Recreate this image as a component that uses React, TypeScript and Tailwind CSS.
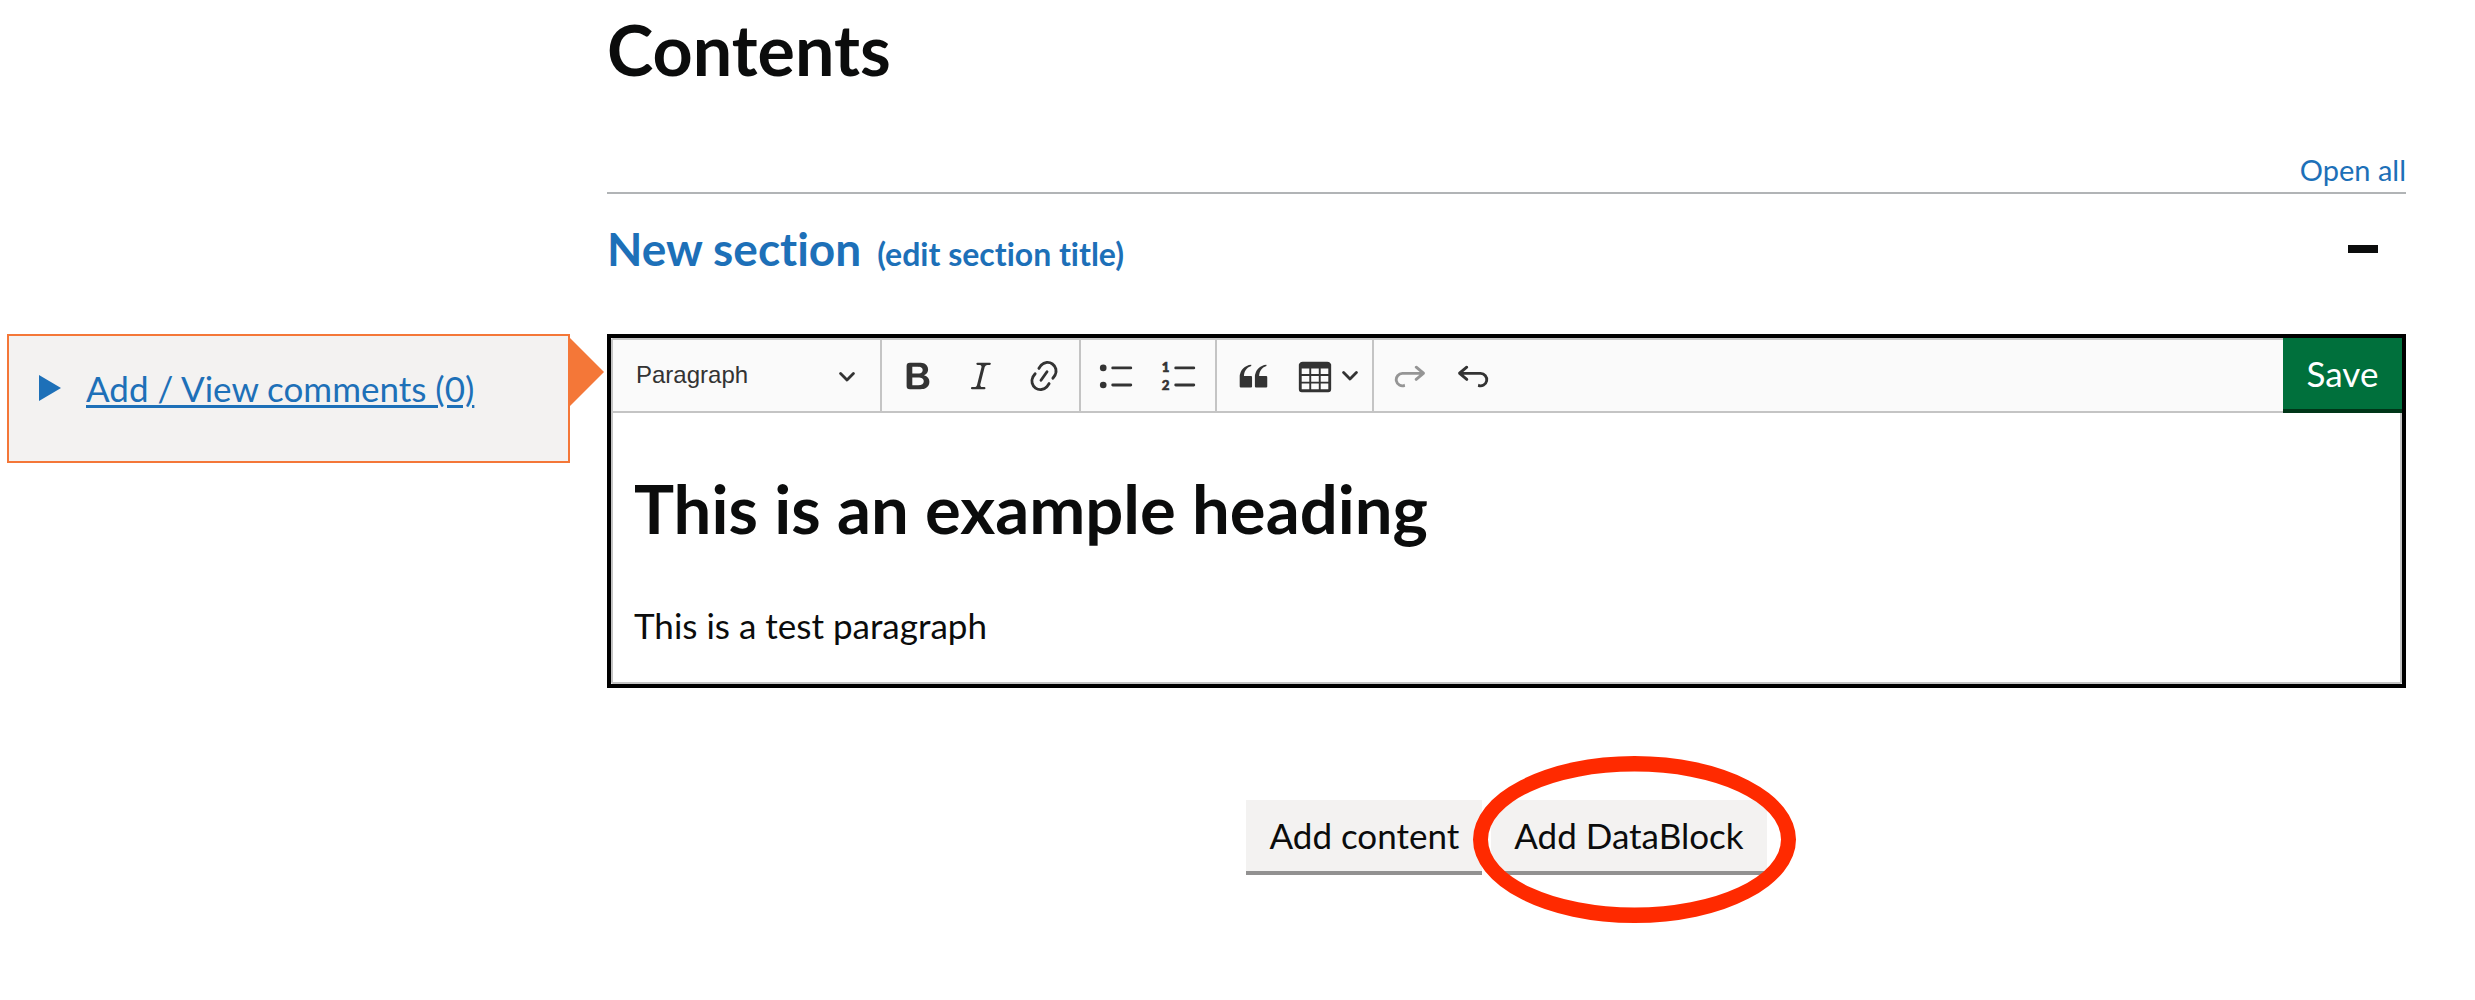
import React from "react";

function Icon({ children }: { children: React.ReactNode }) {
  return (
    <svg viewBox="0 0 20 20" className="size-[38px] shrink-0 fill-current" aria-hidden="true">
      {children}
    </svg>
  );
}

function Chevron({ className = "" }: { className?: string }) {
  return (
    <svg viewBox="0 0 16 10" className={`h-[10px] w-4 shrink-0 ${className}`} fill="none" stroke="#333" strokeWidth="2.8" strokeLinecap="round" strokeLinejoin="round" aria-hidden="true">
      <path d="M1.6 1.5 8 8l6.4-6.5" />
    </svg>
  );
}

function ToolButton({ label, children, disabled = false }: { label: string; children: React.ReactNode; disabled?: boolean }) {
  return (
    <button type="button" aria-label={label} disabled={disabled} className="flex h-full w-[63px] items-center justify-center disabled:opacity-50">
      <Icon>{children}</Icon>
    </button>
  );
}

const listLines =
  "M7 5.75c0 .414.336.75.75.75h9.5a.75.75 0 1 0 0-1.5h-9.5a.75.75 0 0 0-.75.75zm0 9c0 .414.336.75.75.75h9.5a.75.75 0 1 0 0-1.5h-9.5a.75.75 0 0 0-.75.75z";
const undoPath =
  "m5.042 9.367 2.189 1.837a.75.75 0 0 1-.965 1.149l-3.788-3.18a.747.747 0 0 1-.21-.284.75.75 0 0 1 .17-.945L6.23 4.762a.75.75 0 1 1 .964 1.15L4.863 7.866h8.917A.75.75 0 0 1 14 7.9a4 4 0 1 1-1.477 7.718l.344-1.489a2.5 2.5 0 1 0 1.094-4.73l.008-.032H5.042z";

function Toolbar() {
  return (
    <div role="toolbar" aria-label="Editor toolbar" className="flex h-[73px] border-b-2 border-[#c4c4c4] bg-[#fafafa] text-[#333]">
      <div className="relative w-[269px] border-r-2 border-[#c4c4c4]">
        <select aria-label="Heading" className="h-full w-full appearance-none bg-transparent pr-12 pb-[2px] pl-[23px] font-['Liberation_Sans',sans-serif] text-[24px]">
          <option>Paragraph</option>
          <option>Heading</option>
        </select>
        <Chevron className="pointer-events-none absolute top-8 right-[25px]" />
      </div>
      <div className="flex border-r-2 border-[#c4c4c4] px-1">
        <ToolButton label="Bold">
          <path d="M10.187 17H5.773c-.637 0-1.092-.138-1.364-.415-.273-.277-.409-.718-.409-1.323V4.738c0-.617.14-1.062.419-1.332.279-.27.73-.406 1.354-.406h4.68c.69 0 1.288.041 1.793.124.506.083.96.242 1.36.478.341.197.644.447.906.75a3.262 3.262 0 0 1 .808 2.162c0 1.401-.722 2.426-2.167 3.075C15.05 10.175 16 11.315 16 13.01a3.756 3.756 0 0 1-2.296 3.504 6.1 6.1 0 0 1-1.517.377c-.571.073-1.238.11-2 .11zm-.217-6.217H7v4.087h3.069c1.977 0 2.965-.69 2.965-2.072 0-.707-.256-1.22-.768-1.537-.512-.319-1.277-.478-2.296-.478zM7 5.13v3.619h2.606c.729 0 1.292-.067 1.69-.2a1.6 1.6 0 0 0 .91-.765c.165-.267.247-.566.247-.897 0-.707-.26-1.176-.778-1.409-.519-.232-1.31-.348-2.375-.348H7z" />
        </ToolButton>
        <ToolButton label="Italic">
          <path d="m9.586 14.633.021.004c-.036.335.095.655.393.962.082.083.173.15.274.201h1.474a.6.6 0 1 1 0 1.2H5.304a.6.6 0 0 1 0-1.2h1.15c.474-.07.809-.182 1.005-.334.157-.122.291-.32.404-.597l2.416-9.55a1.053 1.053 0 0 0-.281-.823 1.12 1.12 0 0 0-.442-.296H8.15a.6.6 0 0 1 0-1.2h6.443a.6.6 0 1 1 0 1.2h-1.195c-.376.056-.65.155-.823.296-.215.175-.423.439-.623.79l-2.366 9.347z" />
        </ToolButton>
        <ToolButton label="Link">
          <path d="m11.077 15 .991-1.416a.75.75 0 1 1 1.229.86l-1.148 1.64a.748.748 0 0 1-.217.206 5.251 5.251 0 0 1-8.503-5.955.741.741 0 0 1 .12-.274l1.147-1.639a.75.75 0 1 1 1.228.86L4.933 10.7l.006.003a3.75 3.75 0 0 0 6.132 4.294l.006.004zm5.494-5.335a.748.748 0 0 1-.12.274l-1.147 1.639a.75.75 0 1 1-1.228-.86l.86-1.23a3.75 3.75 0 0 0-6.144-4.301l-.86 1.229a.75.75 0 0 1-1.229-.86l1.148-1.64a.748.748 0 0 1 .217-.206 5.251 5.251 0 0 1 8.503 5.955zm-4.563-2.532a.75.75 0 0 1 .184 1.045l-3.155 4.505a.75.75 0 1 1-1.229-.86l3.155-4.506a.75.75 0 0 1 1.045-.184z" />
        </ToolButton>
      </div>
      <div className="flex border-r-2 border-[#c4c4c4] px-1">
        <ToolButton label="Bulleted list">
          <path d={listLines} />
          <circle cx="2.75" cy="5.75" r="1.75" />
          <circle cx="2.75" cy="14.75" r="1.75" />
        </ToolButton>
        <ToolButton label="Numbered list">
          <path d={listLines} />
          <g className="font-['Lato',sans-serif] text-[7px] font-black" stroke="currentColor" strokeWidth="0.3">
            <text x="0.4" y="8">1</text>
            <text x="0.4" y="17.6">2</text>
          </g>
        </ToolButton>
      </div>
      <div className="flex border-r-2 border-[#c4c4c4] px-1">
        <ToolButton label="Block quote">
          <path d="M3 10.423a6.5 6.5 0 0 1 6.056-6.408l.038.67C6.448 5.423 5.354 7.663 5.22 10H9c.552 0 .5.432.5.986v4.511c0 .554-.448.503-1 .503h-5c-.552 0-.5-.449-.5-1.003v-4.574zm8 0a6.5 6.5 0 0 1 6.056-6.408l.038.67c-2.646.739-3.74 2.979-3.873 5.315H17c.552 0 .5.432.5.986v4.511c0 .554-.448.503-1 .503h-5c-.552 0-.5-.449-.5-1.003v-4.574z" />
        </ToolButton>
        <button type="button" aria-label="Insert table" className="flex h-full w-[84px] items-center gap-2 pl-3">
          <Icon>
            <path d="M3 6v3h4V6H3zm0 4v3h4v-3H3zm0 4v3h4v-3H3zm5 3h4v-3H8v3zm5 0h4v-3h-4v3zm4-4v-3h-4v3h4zm0-4V6h-4v3h4zm1.5 8a1.5 1.5 0 0 1-1.5 1.5H3A1.5 1.5 0 0 1 1.5 17V4c.222-.863 1.068-1.5 2-1.5h13c.932 0 1.778.637 2 1.5v13zM12 13v-3H8v3h4zm0-4V6H8v3h4z" />
          </Icon>
          <Chevron />
        </button>
      </div>
      <div className="flex px-1">
        <ToolButton label="Redo" disabled>
          <path transform="matrix(-1 0 0 1 20 0)" d={undoPath} />
        </ToolButton>
        <ToolButton label="Undo">
          <path d={undoPath} />
        </ToolButton>
      </div>
    </div>
  );
}

function Comments() {
  return (
    <aside className="relative h-[129px] self-start border-2 border-[#f47738] bg-[#f3f2f1] pt-8 pl-[30px]">
      <details>
        <summary className="flex cursor-pointer list-none items-center gap-[25px] text-[35px] leading-[40px] text-[#1d70b8]">
          <svg viewBox="0 0 22 26" className="h-[26px] w-[22px] fill-current" aria-hidden="true">
            <path d="M0 0 22 13 0 26z" />
          </svg>
          <span className="underline decoration-3 underline-offset-3">Add / View comments (0)</span>
        </summary>
      </details>
      <svg viewBox="0 0 34 68" className="absolute top-[2px] -right-9 h-[68px] w-[34px] fill-[#f47738]" aria-hidden="true">
        <path d="M0 0 34 34 0 68z" />
      </svg>
    </aside>
  );
}

const secondaryButton = "h-[75px] border-b-4 border-[#929191] bg-[#f3f2f1] px-[23px] text-[35px]";

export default function App() {
  return (
    <main className="grid grid-cols-[563px_1fr] gap-x-[37px] bg-white pr-[69px] pb-[125px] pl-[7px] font-['Lato',sans-serif] text-[#0b0c0c] [font-variant-ligatures:none]">
      <header className="col-start-2 pt-[9px] pb-[58px]">
        <h2 className="text-[70px] leading-[80px] font-bold">Contents</h2>
        <div className="mt-[65px] flex justify-end border-b-2 border-[#b1b4b6] pb-[6px]">
          <button type="button" className="text-[29px] leading-[32px] text-[#1d70b8]">Open all</button>
        </div>
        <div className="mt-7 flex items-center justify-between pr-7">
          <h3 className="flex items-baseline gap-4 font-bold text-[#1d70b8]">
            <button type="button" className="text-[46px] leading-[54px]">New section</button>
            <button type="button" className="text-[32px] leading-[40px]">(edit section title)</button>
          </h3>
          <button type="button" aria-label="Collapse section" className="flex h-10 w-[30px] items-center">
            <span className="h-2 w-full bg-[#0b0c0c]" />
          </button>
        </div>
      </header>

      <Comments />

      <section className="relative border-4 border-black">
        <div className="rounded-xs border-2 border-[#c4c4c4]">
          <Toolbar />
          <div className="px-[21px] pt-[55px] pb-8">
            <h2 className="text-[67px] leading-[80px] font-bold">This is an example heading</h2>
            <p className="mt-[52px] text-[35px] leading-[50px]">This is a test paragraph</p>
          </div>
        </div>
        <button type="button" className="absolute top-0 right-0 h-[75px] w-[119px] border-b-4 border-[#003618] bg-[#00703c] text-[35px] text-white">
          Save
        </button>
      </section>

      <div className="col-start-2 mt-28 flex justify-center gap-[9px]">
        <button type="button" className={secondaryButton}>Add content</button>
        <div className="relative">
          <button type="button" className={secondaryButton}>Add DataBlock</button>
          <svg viewBox="0 0 323 167" className="pointer-events-none absolute -top-11 -left-[18px] h-[167px] w-[323px] max-w-none" aria-hidden="true">
            <path fill="#ff2a00" fillRule="evenodd" d="M0 83.500A161.500 83.500 0 0 1 323 83.500A161.500 83.500 0 0 1 0 83.500ZM15 83.500A146.500 68 0 0 0 308 83.500A146.500 68 0 0 0 15 83.500Z" />
          </svg>
        </div>
      </div>
    </main>
  );
}
